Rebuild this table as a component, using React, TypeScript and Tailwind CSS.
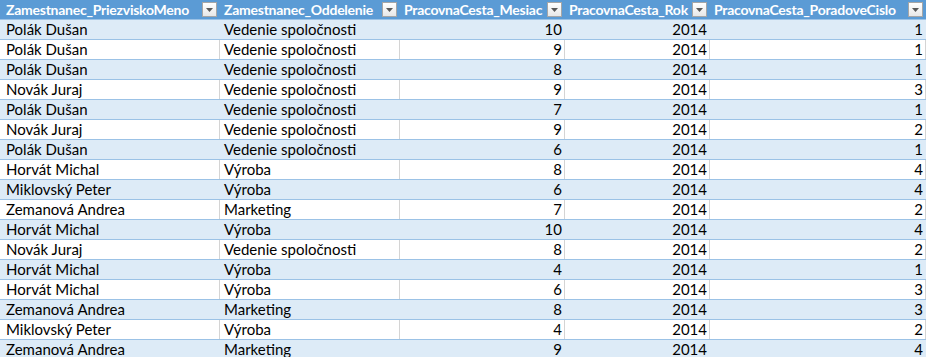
const headers = [
  'Zamestnanec_PriezviskoMeno',
  'Zamestnanec_Oddelenie',
  'PracovnaCesta_Mesiac',
  'PracovnaCesta_Rok',
  'PracovnaCesta_PoradoveCislo',
];

type Row = [string, string, number, number, number];

const rows: Row[] = [
  ['Polák Dušan', 'Vedenie spoločnosti', 10, 2014, 1],
  ['Polák Dušan', 'Vedenie spoločnosti', 9, 2014, 1],
  ['Polák Dušan', 'Vedenie spoločnosti', 8, 2014, 1],
  ['Novák Juraj', 'Vedenie spoločnosti', 9, 2014, 3],
  ['Polák Dušan', 'Vedenie spoločnosti', 7, 2014, 1],
  ['Novák Juraj', 'Vedenie spoločnosti', 9, 2014, 2],
  ['Polák Dušan', 'Vedenie spoločnosti', 6, 2014, 1],
  ['Horvát Michal', 'Výroba', 8, 2014, 4],
  ['Miklovský Peter', 'Výroba', 6, 2014, 4],
  ['Zemanová Andrea', 'Marketing', 7, 2014, 2],
  ['Horvát Michal', 'Výroba', 10, 2014, 4],
  ['Novák Juraj', 'Vedenie spoločnosti', 8, 2014, 2],
  ['Horvát Michal', 'Výroba', 4, 2014, 1],
  ['Horvát Michal', 'Výroba', 6, 2014, 3],
  ['Zemanová Andrea', 'Marketing', 8, 2014, 3],
  ['Miklovský Peter', 'Výroba', 4, 2014, 2],
  ['Zemanová Andrea', 'Marketing', 9, 2014, 4],
];

const gridCols = 'grid grid-cols-[220px_180px_165px_145px_216px]';

function FilterButton() {
  return (
    <div className="flex h-[15px] w-[15px] shrink-0 items-center justify-center border border-[#a6a6a6] bg-gradient-to-b from-white to-[#e8e8e8]">
      <svg width="7" height="4" viewBox="0 0 7 4">
        <path d="M0 0h7L3.5 4z" fill="#595959" />
      </svg>
    </div>
  );
}

export default function App() {
  return (
    <div className="h-[357px] w-[927px] overflow-hidden bg-white font-['Lato','Liberation_Sans',sans-serif] text-[15px] leading-none text-black">
      <div className={`${gridCols} h-[20px] w-[926px] border-b border-[#9bc2e6] bg-[#5b9bd5]`}>
        {headers.map((h, j) => (
          <div key={h} className={`flex items-center justify-between pr-[3px] ${j === 0 ? 'pl-[6px]' : 'pl-[4px]'}`}>
            <span className="whitespace-nowrap text-[14px] font-bold tracking-[-0.25px] text-white">{h}</span>
            <FilterButton />
          </div>
        ))}
      </div>

      {rows.map((row, i) => {
        const banded = i % 2 === 0;
        const cellBorder = banded ? 'border-[#ddebf7]' : 'border-[#d4d4d4]';
        return (
          <div
            key={i}
            className={`${gridCols} h-[20px] w-[926px] border-b border-[#9bc2e6] ${banded ? 'bg-[#ddebf7]' : 'bg-white'}`}
          >
            {row.map((cell, j) => (
              <div
                key={j}
                className={`flex items-center border-r ${cellBorder} ${
                  typeof cell === 'number' ? 'justify-end pr-[2px]' : j === 0 ? 'pl-[6px]' : 'pl-[4px]'
                }`}
              >
                {cell}
              </div>
            ))}
          </div>
        );
      })}
    </div>
  );
}
